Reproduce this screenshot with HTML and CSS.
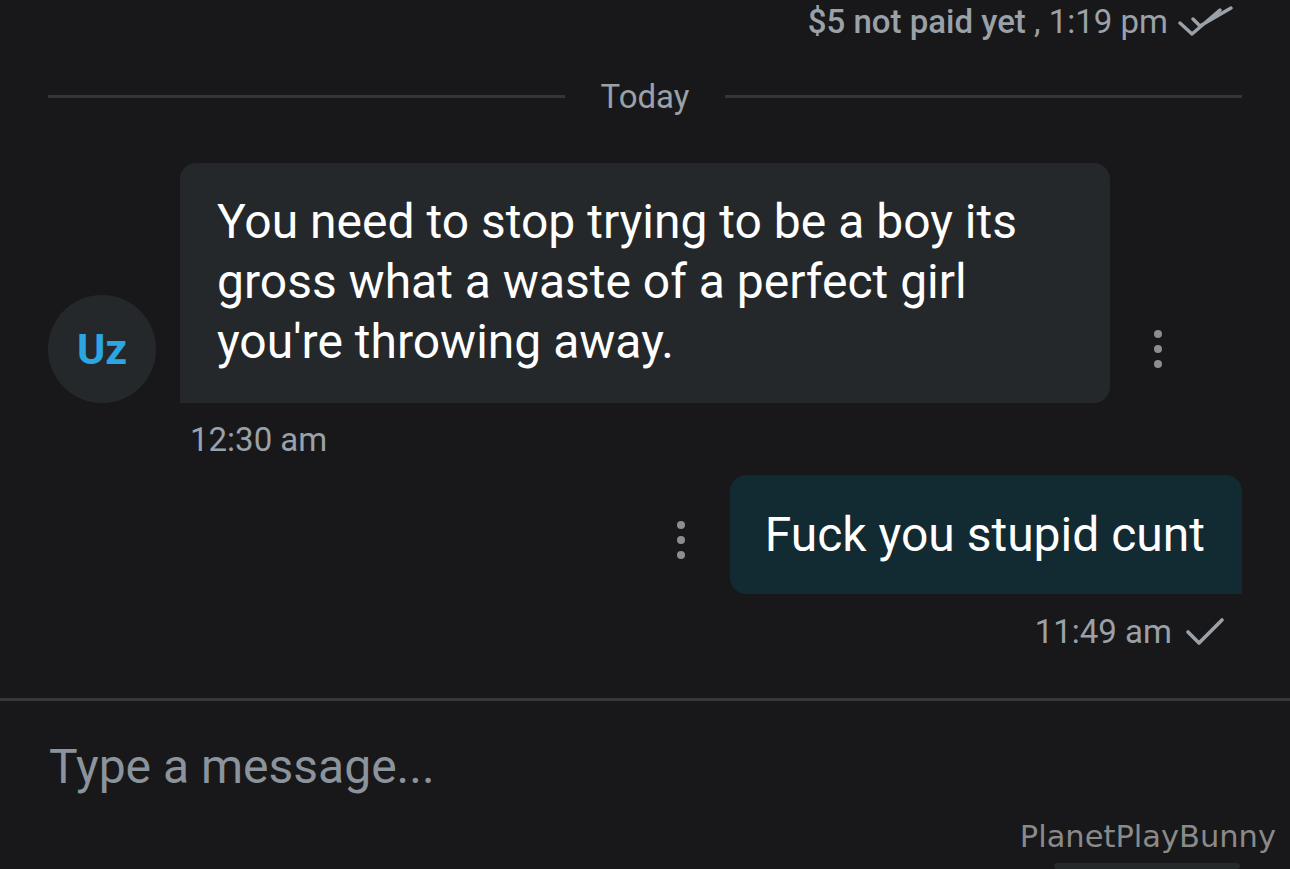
FILE: index.html
```html
<!DOCTYPE html>
<html lang="en">
<head>
<meta charset="utf-8">
<title>Chat</title>
<link rel="stylesheet" href="styles.css">
</head>
<body>
<div class="chat">
  <div class="status">
    <span class="status-text"><b>$5 not paid yet</b> , 1:19 pm</span>
    <svg class="dcheck" width="56" height="34" viewBox="0 0 56 34"><path d="M2 18 L14 29 L42 5 M15 14 L22 21 L53 3" fill="none" stroke="#9aa1a8" stroke-width="3.4" stroke-linecap="round" stroke-linejoin="round"/></svg>
  </div>
  <div class="divider"><span class="line"></span><span class="label">Today</span><span class="line"></span></div>

  <div class="row-in">
    <div class="avatar">Uz</div>
    <div class="bubble-in">You need to stop trying to be a boy its gross what a waste of a perfect girl you're throwing away.</div>
    <div class="dots"><i></i><i></i><i></i></div>
  </div>
  <div class="time-in">12:30 am</div>

  <div class="row-out">
    <div class="dots"><i></i><i></i><i></i></div>
    <div class="bubble-out">Fuck you stupid cunt</div>
  </div>
  <div class="time-out">11:49 am
    <svg width="44" height="34" viewBox="0 0 44 34"><path d="M4 17 L15 28 L38 5" fill="none" stroke="#9aa1a8" stroke-width="3.6" stroke-linecap="round" stroke-linejoin="round"/></svg>
  </div>
</div>
<div class="composer">
  <div class="placeholder">Type a message...</div>
  <div class="watermark">PlanetPlayBunny</div>
  <div class="send-btn"></div>
</div>
</body>
</html>
```
FILE: styles.css
```css
html, body { margin: 0; padding: 0; }
body {
  background: #18181a;
  width: 1290px;
  height: 869px;
  overflow: hidden;
  font-family: Roboto, "Liberation Sans", sans-serif;
  color: #fff;
}
.chat { height: 698px; }
.status {
  display: flex;
  justify-content: flex-end;
  align-items: center;
  height: 42px;
  padding-right: 56px;
  color: #9aa1a8;
  font-size: 33px;
}
.status b { font-weight: 500; }
.status-text { margin-right: 10px; }
.dcheck { margin-top: 2px; }
.divider {
  display: flex;
  align-items: center;
  margin: 34px 48px 0 48px;
  height: 40px;
}
.divider .line { flex: 1; height: 3px; background: #333538; }
.divider .label {
  color: #9aa1a8;
  font-size: 33px;
  padding: 0 36px;
}
.row-in {
  display: flex;
  align-items: flex-end;
  margin-top: 47px;
  padding-left: 48px;
}
.avatar {
  width: 108px;
  height: 108px;
  border-radius: 50%;
  background: #25282a;
  color: #2ba6e1;
  font-weight: 700;
  font-size: 43px;
  display: flex;
  align-items: center;
  justify-content: center;
  margin-right: 24px;
  flex: none;
}
.bubble-in {
  width: 856px;
  padding: 29px 37px 31px 37px;
  background: #25282a;
  border-radius: 16px 16px 16px 0;
  font-size: 48px;
  line-height: 60px;
}
.dots {
  width: 10px;
  height: 108px;
  display: flex;
  flex-direction: column;
  align-items: center;
  justify-content: center;
  gap: 7px;
  margin-left: 43px;
}
.dots i {
  display: block;
  width: 8px;
  height: 8px;
  border-radius: 50%;
  background: #8b8d90;
}
.time-in {
  color: #9aa1a8;
  font-size: 33px;
  margin: 20px 0 0 190px;
  line-height: 34px;
}
.row-out {
  display: flex;
  justify-content: flex-end;
  align-items: center;
  margin-top: 18px;
  padding-right: 48px;
}
.row-out .dots { margin: 10px 44px 0 0; }
.bubble-out {
  height: 119px;
  box-sizing: border-box;
  padding: 0 37px 0 35px;
  display: flex;
  align-items: center;
  background: #122a31;
  border-radius: 16px 16px 0 16px;
  font-size: 48px;
}
.time-out {
  display: flex;
  justify-content: flex-end;
  align-items: center;
  gap: 12px;
  color: #9aa1a8;
  font-size: 33px;
  padding-right: 62px;
  margin-top: 18px;
}
.composer {
  border-top: 3px solid #36383b;
  height: 168px;
  padding-left: 49px;
  display: flex;
  flex-direction: column;
}
.placeholder {
  color: #8b949c;
  font-size: 48px;
  margin-top: 40px;
  line-height: 52px;
}
.watermark {
  align-self: flex-end;
  margin: 27px 14px 0 0;
  font-family: "DejaVu Sans", sans-serif;
  color: #8a8a8a;
  font-size: 30.5px;
  line-height: 34px;
}
.send-btn {
  align-self: flex-end;
  margin: 9px 50px 0 0;
  width: 186px;
  height: 60px;
  border-radius: 30px;
  background: #25292a;
}
```
